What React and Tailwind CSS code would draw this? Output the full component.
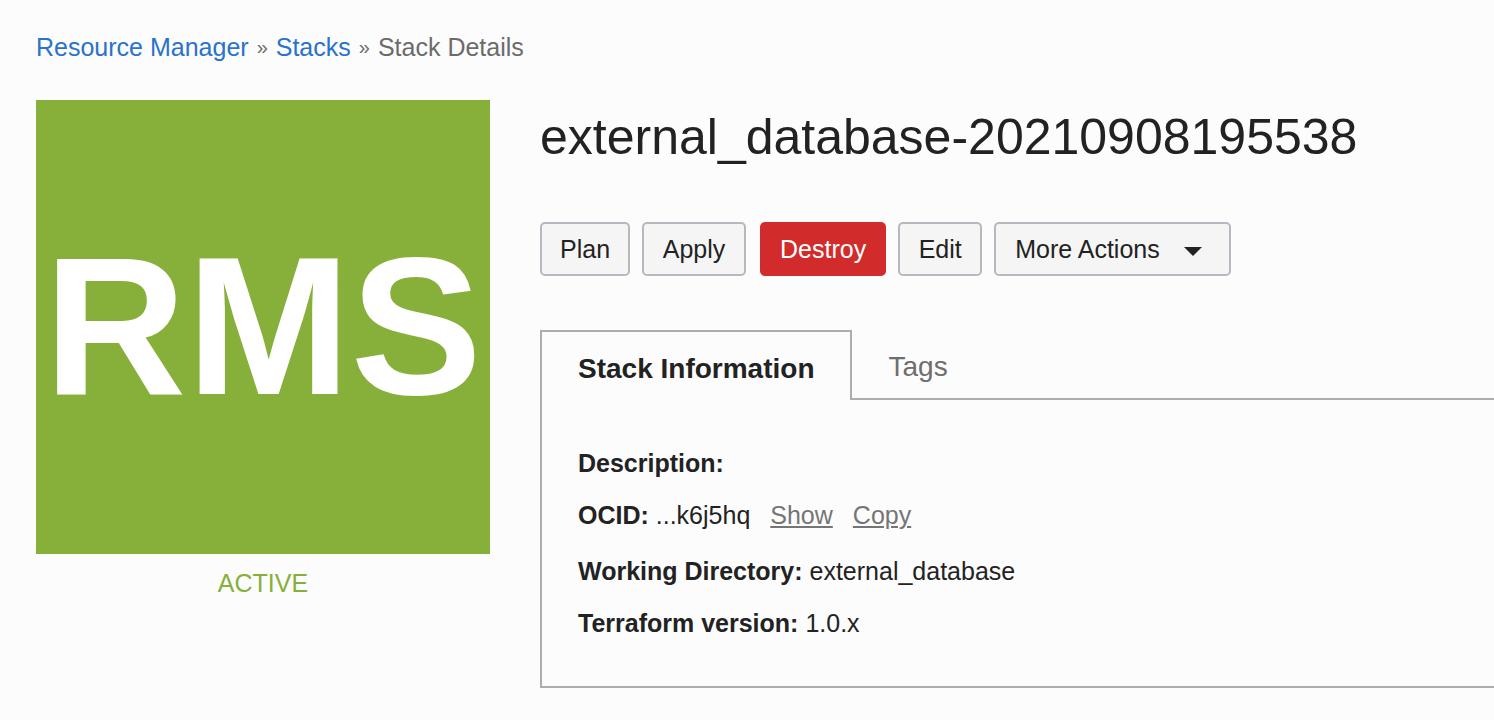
const base = "flex h-[54px] items-center justify-center rounded-[5px] text-[25px] leading-[30px]";
const btn = base + " border-2 border-[#b5bac1] bg-[#f5f5f5] text-[#222]";
const linkBtn = "ml-5 cursor-pointer text-[#757575] underline decoration-2 underline-offset-2";

export default function App() {
  return (
    <div className="min-h-screen overflow-x-hidden bg-[#fcfcfc] pt-8 pl-9 font-['Liberation_Sans',Arial,sans-serif] text-[#222]">
      <nav aria-label="Breadcrumb" className="flex gap-2 text-[25px] leading-[30px] text-[#6b6b6b]">
        <a href="#resource-manager" className="text-[#2a72cb]">Resource Manager</a>
        <span className="text-[20px]">»</span>
        <a href="#stacks" className="text-[#2a72cb]">Stacks</a>
        <span className="text-[20px]">»</span>
        <span>Stack Details</span>
      </nav>
      <div className="mt-[38px] flex gap-[50px]">
        <aside className="w-[454px] shrink-0 text-center">
          <div className="flex aspect-square items-center justify-center bg-[#86b03a] pb-[2px]">
            <span className="text-[197px] leading-none font-bold text-white">RMS</span>
          </div>
          <p className="mt-3 text-[25px] leading-[34px] text-[#86b03a]">ACTIVE</p>
        </aside>
        <main className="min-w-0 grow">
          <h1 className="pt-[7px] text-[50px] leading-[60px]">external_database-20210908195538</h1>
          <div className="mt-[55px] flex gap-3">
            <button className={btn + " px-[18px]"}>Plan</button>
            <button className={btn + " min-w-[104px] px-[18px]"}>Apply</button>
            <button className={base + " ml-[2px] bg-[#d22b2b] px-5 text-white"}>Destroy</button>
            <button className={btn + " min-w-[84px] px-[18px]"}>Edit</button>
            <button className={btn + " gap-6 pr-[27px] pl-[19px]"}>
              More Actions
              <svg viewBox="0 0 18 13" className="h-[13px] w-[18px]" fill="#222" aria-hidden="true"><path d="M0 4h18l-9 9z" /></svg>
            </button>
          </div>
          <div role="tablist" className="mt-[54px] flex h-[70px]">
            <button role="tab" aria-selected="true" className="border-2 border-b-0 border-[#adadad] px-9 pt-[6px] text-[28px] leading-9 font-bold">Stack Information</button>
            <button role="tab" aria-selected="false" className="grow border-b-2 border-[#adadad] pt-[6px] pl-9 text-left text-[28px] leading-9 text-[#6e6e6e]">Tags</button>
          </div>
          <section className="border-b-2 border-l-2 border-[#adadad] pt-[45px] pb-[45px] pl-9 text-[25px] leading-9">
            <p className="font-bold">Description:</p>
            <p className="mt-4">
              <b>OCID:</b> ...k6j5hq
              <button className={linkBtn}>Show</button>
              <button className={linkBtn}>Copy</button>
            </p>
            <p className="mt-5"><b>Working Directory:</b> external_database</p>
            <p className="mt-4"><b>Terraform version:</b> 1.0.x</p>
          </section>
        </main>
      </div>
    </div>
  );
}
